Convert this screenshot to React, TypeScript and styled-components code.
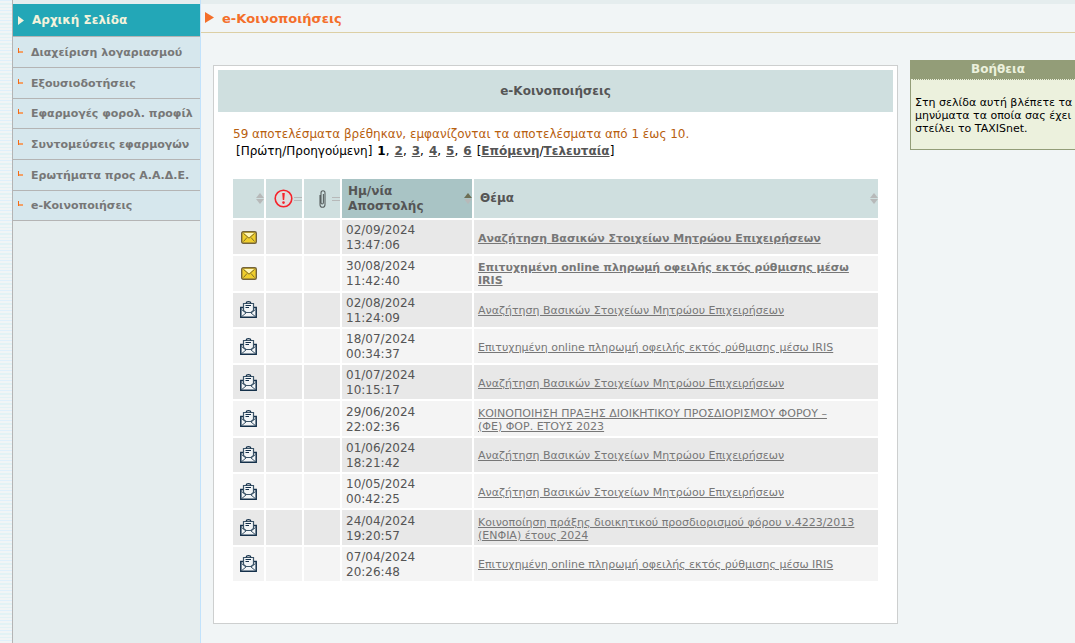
import React from "react";
import styled, { createGlobalStyle } from "styled-components";

const Global = createGlobalStyle`
  * { box-sizing: border-box; }
  body {
    margin: 0;
    background: #f1f5f6;
    font-family: Verdana, "DejaVu Sans", sans-serif;
    font-size: 12px;
    color: #555;
  }
`;

const Page = styled.div`
  display: flex;
  min-height: 100vh;
  background: repeating-linear-gradient(
    #dff0fb 0 1px, #f1f5f6 1px 3px, #e2f3f5 3px 5px,
    #f1f5f6 5px 7px, #e2f3f5 7px 8px, #f1f5f6 8px 10px
  );
  padding-left: 12px;
`;

const Sidebar = styled.nav`
  flex: 0 0 189px;
  padding-top: 4px;
  background: #e5edee;
  border-left: 1px solid #b4b4b4;
  border-right: 1px solid #c2e2fb;
`;

const HomeLink = styled.a`
  display: flex;
  align-items: center;
  gap: 8px;
  height: 33px;
  padding-left: 5px;
  background: #23a7b7;
  border-bottom: 1px solid #b4b4b4;
  color: #f4f3dc;
  font-size: 12px;
  font-weight: bold;
  text-decoration: none;
`;

const Menu = styled.ul`
  margin: 0;
  padding: 0;
  list-style: none;
`;

const MenuItem = styled.li`
  height: 31px;
  border-bottom: 1px solid #b4b4b4;

  &:nth-child(3n) { height: 30px; }
`;

const MenuLink = styled.a`
  display: flex;
  align-items: center;
  gap: 8px;
  height: 100%;
  padding-left: 5px;
  background: #d6e7ed;
  color: #777;
  font-size: 11px;
  font-weight: bold;
  white-space: nowrap;
  text-decoration: none;

  svg { flex: none; margin-bottom: 4px; }
`;

const Main = styled.div`
  flex: 1;
  min-width: 0;
  background: #f1f5f6;
`;

const TopStrip = styled.div`
  height: 4px;
  background: #e5edee;
`;

const Crumb = styled.h1`
  display: flex;
  align-items: center;
  gap: 8px;
  height: 29px;
  margin: 0;
  padding-left: 4px;
  border-bottom: 1px solid #dccfa5;
  color: #f46f2b;
  font-size: 13px;

  svg { margin-bottom: 2px; }
`;

const Columns = styled.div`
  display: flex;
  align-items: flex-start;
  gap: 12px;
  padding-left: 12px;
`;

const Panel = styled.main`
  flex: 1;
  min-width: 0;
  margin-top: 32px;
  padding: 4px 4px 42px;
  background: #fff;
  border: 1px solid #cdcfcf;
`;

const PanelTitle = styled.h2`
  margin: 0;
  background: #cfdfdf;
  color: #555;
  font-size: 12px;
  line-height: 42px;
  text-align: center;
`;

const Results = styled.div`
  padding: 14px 15px 0;
`;

const Summary = styled.p`
  margin: 0;
  color: #b8600f;
  line-height: 17px;
  white-space: nowrap;
`;

const Pager = styled.div`
  display: flex;
  gap: 5px;
  margin-bottom: 19px;
  padding-left: 3px;
  color: #000;
  line-height: 17px;
  white-space: nowrap;

  a { color: #555; font-weight: bold; }
`;

const Table = styled.table`
  width: 100%;
  height: 402px;
  table-layout: fixed;
  border-collapse: separate;
  border-spacing: 0;
`;

const Head = styled.th<{ $active?: boolean; $icon?: boolean }>`
  height: 39px;
  padding: 0 0 0 ${(p) => (p.$icon ? "8px" : "6px")};
  background: ${(p) => (p.$active ? "#a9c4c5" : "#cfdfdf")};
  border-left: 2px solid #fff;
  color: #555;
  font-size: 12px;
  line-height: 15px;
  text-align: left;

  &:first-child { border-left: 0; }
`;

const HeadInner = styled.div`
  display: flex;
  align-items: center;
  justify-content: space-between;

  svg { flex: none; }
`;

const Row = styled.tr`
  background: #f4f4f4;
  &:nth-child(odd) { background: #e8e8e8; }
`;

const Cell = styled.td<{ $icon?: boolean }>`
  padding: ${(p) => (p.$icon ? "0" : "3px 4px 1px")};
  border-left: 2px solid #fff;
  border-top: 2px solid #fff;
  line-height: 15px;
  text-align: ${(p) => (p.$icon ? "center" : "left")};

  &:first-child { border-left: 0; }
  svg { display: block; margin: 0 auto; }
`;

const Subject = styled.a<{ $unread: boolean }>`
  color: #777;
  display: block;
  font-size: 11px;
  line-height: 13px;
  font-weight: ${(p) => (p.$unread ? "bold" : "normal")};
`;

const Help = styled.aside`
  flex: 0 0 165px;
  margin-top: 27px;
  border-left: 1px solid #939d78;
  border-bottom: 1px solid #939d78;
  background: #ecf1dd;
  color: #000;
  font-size: 11px;
`;

const HelpTitle = styled.h2`
  margin: 0;
  height: 20px;
  padding-left: 10px;
  background: #939d78;
  border-bottom: 1px dotted #ecf1dd;
  color: #ecf1dd;
  font-size: 12px;
  line-height: 18px;
  text-align: center;
`;

const HelpText = styled.p`
  margin: 0;
  padding: 16px 0 14px 4px;
  line-height: 13px;
`;

const Bullet = () => (
  <svg width="5" height="5" aria-hidden="true">
    <path d="M1 3h4v2H1z" fill="#f2a066" />
    <path d="M0 0h1v5H0z" fill="#f46a14" />
  </svg>
);

const Sorter = ({ active = false }: { active?: boolean }) => (
  <svg width="8" height="11" aria-hidden="true">
    <path d="M0 5L4 0l4 5z" fill={active ? "#6d6f55" : "#b7b9b9"} />
    <path d="M0 6h8l-4 5z" fill="#b7b9b9" />
  </svg>
);

const Equals = () => (
  <svg width="8" height="4" aria-hidden="true">
    <path d="M0 .5h8M0 3.5h8" stroke="#b7b9b9" />
  </svg>
);

const Alert = () => (
  <svg width="19" height="19" viewBox="0 0 19 19" role="img" aria-label="Επείγον">
    <circle cx="9.5" cy="9.5" r="8.3" fill="#dedede" stroke="#f5232b" strokeWidth="1.6" />
    <path d="M8.2 4h2.6l-.6 7H8.8z" fill="#f5232b" />
    <circle cx="9.5" cy="13.6" r="1.3" fill="#f5232b" />
  </svg>
);

const Clip = () => (
  <svg width="7" height="18" viewBox="0 0 7 18" aria-hidden="true">
    <path d="M1 5v9.500q0 2.800 2.500 2.800T6 14.500V3Q6 .8 4 .8T2 3v9.500q0 1.500 1.200 1.500t1.200-1.500V4" fill="none" stroke="#596060" strokeWidth="1.1" />
  </svg>
);

const Closed = () => (
  <svg width="16" height="13" viewBox="0 0 16 13" aria-hidden="true">
    <rect x=".7" y=".7" width="14.600" height="11.600" rx="1.500" fill="#f0ce2c" stroke="#75643a" strokeWidth="1.400" />
    <path d="M3 2h10L8 6.500z" fill="#fff6b8" />
    <path d="M2.500 2.500L8 7.200l5.500-4.700M2.500 10.500l3.500-4M13.500 10.500l-3.500-4" fill="none" stroke="#75642a" strokeWidth=".9" />
  </svg>
);

const Open = () => (
  <svg width="17" height="17" viewBox="0 0 17 17" aria-hidden="true">
    <path d="M1 7h15v9H1z" fill="#f2f5f7" />
    <path d="M3.500 6.500H.8v9.700h15.400V6.500h-2.700" fill="none" stroke="#14304a" strokeWidth="1.500" />
    <path d="M3.500 9.500v-7h10v7l-2.500 2H6z" fill="#f2f5f7" stroke="#3b5468" strokeWidth="1.200" />
    <path d="M6 2.500Q6.300.7 8.500.7T11 2.500" fill="none" stroke="#14304a" strokeWidth="1.300" />
    <path d="M1.500 8.500L6 12l-4.500 3.700M15.500 8.500L11 12l4.500 3.700" fill="none" stroke="#3b5468" strokeWidth="1" />
    <path d="M5.500 4.500h5.500M5.500 6.500h3.500" stroke="#14304a" />
  </svg>
);

const menu = [
  "Διαχείριση λογαριασμού",
  "Εξουσιοδοτήσεις",
  "Εφαρμογές φορολ. προφίλ",
  "Συντομεύσεις εφαρμογών",
  "Ερωτήματα προς Α.Α.Δ.Ε.",
  "e-Κοινοποιήσεις",
];

const SEARCH = "Αναζήτηση Βασικών Στοιχείων Μητρώου Επιχειρήσεων";
const PAYMENT = "Επιτυχημένη online πληρωμή οφειλής εκτός ρύθμισης μέσω IRIS";

const messages = [
  { date: "02/09/2024", time: "13:47:06", subject: SEARCH, unread: true },
  { date: "30/08/2024", time: "11:42:40", subject: PAYMENT, unread: true },
  { date: "02/08/2024", time: "11:24:09", subject: SEARCH, unread: false },
  { date: "18/07/2024", time: "00:34:37", subject: PAYMENT, unread: false },
  { date: "01/07/2024", time: "10:15:17", subject: SEARCH, unread: false },
  { date: "29/06/2024", time: "22:02:36", subject: "ΚΟΙΝΟΠΟΙΗΣΗ ΠΡΑΞΗΣ ΔΙΟΙΚΗΤΙΚΟΥ ΠΡΟΣΔΙΟΡΙΣΜΟΥ ΦΟΡΟΥ – (ΦΕ)\u00a0ΦΟΡ. ΕΤΟΥΣ 2023", unread: false },
  { date: "01/06/2024", time: "18:21:42", subject: SEARCH, unread: false },
  { date: "10/05/2024", time: "00:42:25", subject: SEARCH, unread: false },
  { date: "24/04/2024", time: "19:20:57", subject: "Κοινοποίηση πράξης διοικητικού προσδιορισμού φόρου ν.4223/2013 (ΕΝΦΙΑ) έτους 2024", unread: false },
  { date: "07/04/2024", time: "20:26:48", subject: PAYMENT, unread: false },
];

export default function App() {
  return (
    <Page>
      <Global />
      <Sidebar>
        <HomeLink href="#">
          <svg width="6" height="9" aria-hidden="true"><path d="M0 0l6 4.500L0 9z" fill="#f4f3dc" /></svg>
          Αρχική Σελίδα
        </HomeLink>
        <Menu>
          {menu.map((label) => (
            <MenuItem key={label}><MenuLink href="#"><Bullet />{label}</MenuLink></MenuItem>
          ))}
        </Menu>
      </Sidebar>
      <Main>
        <TopStrip />
        <Crumb>
          <svg width="9" height="11" aria-hidden="true"><path d="M0 0l9 5.500L0 11z" fill="#f46f2b" /></svg>
          e-Κοινοποιήσεις
        </Crumb>
        <Columns>
          <Panel>
            <PanelTitle>e-Κοινοποιήσεις</PanelTitle>
            <Results>
              <Summary>59 αποτελέσματα βρέθηκαν, εμφανίζονται τα αποτελέσματα από 1 έως 10.</Summary>
              <Pager>
                <span>[Πρώτη/Προηγούμενη]</span>
                <span><b>1</b>,</span>
                {[2, 3, 4, 5].map((n) => (
                  <span key={n}><a href="#">{n}</a>,</span>
                ))}
                <a href="#">6</a>
                <span>[<a href="#">Επόμενη</a>/<a href="#">Τελευταία</a>]</span>
              </Pager>
              <Table>
                <colgroup>
                  <col style={{ width: 31 }} />
                  <col style={{ width: 38 }} />
                  <col style={{ width: 38 }} />
                  <col style={{ width: 132 }} />
                  <col />
                </colgroup>
                <thead>
                  <tr>
                    <Head><HeadInner><span /><Sorter /></HeadInner></Head>
                    <Head $icon><HeadInner><Alert /><Equals /></HeadInner></Head>
                    <Head $icon><HeadInner><span /><Clip /><Equals /></HeadInner></Head>
                    <Head $active><HeadInner>Ημ/νία Αποστολής<Sorter active /></HeadInner></Head>
                    <Head><HeadInner>Θέμα<Sorter /></HeadInner></Head>
                  </tr>
                </thead>
                <tbody>
                  {messages.map((m) => (
                    <Row key={m.date}>
                      <Cell $icon>{m.unread ? <Closed /> : <Open />}</Cell>
                      <Cell />
                      <Cell />
                      <Cell>{m.date}<br />{m.time}</Cell>
                      <Cell><Subject href="#" $unread={m.unread}>{m.subject}</Subject></Cell>
                    </Row>
                  ))}
                </tbody>
              </Table>
            </Results>
          </Panel>
          <Help>
            <HelpTitle>Βοήθεια</HelpTitle>
            <HelpText>Στη σελίδα αυτή βλέπετε τα μηνύματα τα οποία σας έχει στείλει το TAXISnet.</HelpText>
          </Help>
        </Columns>
      </Main>
    </Page>
  );
}
